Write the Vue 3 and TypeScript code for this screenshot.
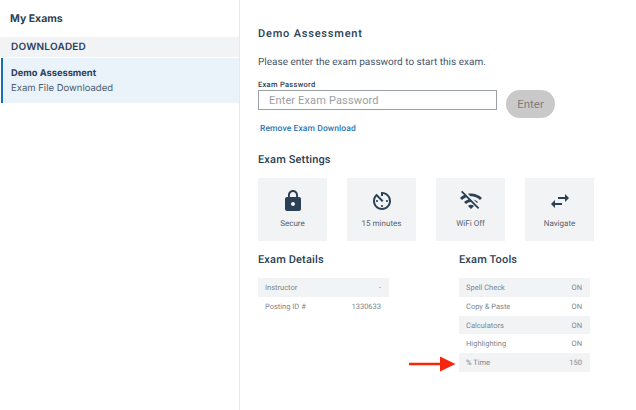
<script setup lang="ts">
const settings = [
  { label: 'Secure', icon: 'lock' },
  { label: '15 minutes', icon: 'timer' },
  { label: 'WiFi Off', icon: 'wifi' },
  { label: 'Navigate', icon: 'nav' },
]
const details = [
  ['Instructor', '-'],
  ['Posting ID #', '1330633'],
]
const tools = [
  ['Spell Check', 'ON'],
  ['Copy & Paste', 'ON'],
  ['Calculators', 'ON'],
  ['Highlighting', 'ON'],
  ['% Time', '150'],
]
</script>

<template>
  <div class="page">
    <aside class="side">
      <h1 class="side-title">My Exams</h1>
      <div class="group">DOWNLOADED</div>
      <div class="item">
        <div class="item-name">Demo Assessment</div>
        <div class="item-sub">Exam File Downloaded</div>
      </div>
    </aside>
    <main class="main">
      <h2 class="title">Demo Assessment</h2>
      <p class="intro">Please enter the exam password to start this exam.</p>
      <label class="pw-label">Exam Password</label>
      <div class="pw-row">
        <input class="pw" placeholder="Enter Exam Password" />
        <button class="enter" type="button">Enter</button>
      </div>
      <a class="remove">Remove Exam Download</a>
      <h3 class="head settings-head">Exam Settings</h3>
      <div class="cards">
        <div v-for="s in settings" :key="s.label" class="card">
          <svg class="icon" viewBox="0 0 24 24" width="24" height="24">
            <path v-if="s.icon === 'lock'" fill="#2b3f55" d="M18 8h-1V6c0-2.76-2.24-5-5-5S7 3.24 7 6v2H6c-1.1 0-2 .9-2 2v10c0 1.1.9 2 2 2h12c1.1 0 2-.9 2-2V10c0-1.1-.9-2-2-2zm-6 9c-1.1 0-2-.9-2-2s.9-2 2-2 2 .9 2 2-.9 2-2 2zm3.1-9H8.9V6c0-1.71 1.39-3.1 3.1-3.1s3.1 1.39 3.1 3.1v2z" />
            <path v-else-if="s.icon === 'timer'" fill="#2b3f55" d="M11 17c0 .55.45 1 1 1s1-.45 1-1-.45-1-1-1-1 .45-1 1zm0-14v4h2V5.08c3.39.49 6 3.39 6 6.92 0 3.87-3.13 7-7 7s-7-3.13-7-7c0-1.68.59-3.22 1.58-4.42L12 13l1.41-1.41-6.8-6.8v.02C4.42 6.45 3 9.05 3 12c0 4.97 4.02 9 9 9 4.97 0 9-4.03 9-9s-4.03-9-9-9h-1zm7 9c0-.55-.45-1-1-1s-1 .45-1 1 .45 1 1 1 1-.45 1-1zM6 12c0 .55.45 1 1 1s1-.45 1-1-.45-1-1-1-1 .45-1 1z" />
            <path v-else-if="s.icon === 'wifi'" fill="#2b3f55" d="M22.99 9C19.15 5.16 13.8 3.76 8.84 4.78l2.52 2.52c3.47-.17 6.99 1.05 9.63 3.7l2-2zm-4 4c-1.29-1.29-2.84-2.13-4.49-2.56l3.53 3.53.96-.97zM2 3.05L5.07 6.1C3.6 6.82 2.22 7.78 1 9l1.99 2c1.24-1.24 2.67-2.16 4.2-2.77l2.24 2.24C7.81 10.89 6.27 11.73 5 13v.01L6.99 15c1.36-1.36 3.14-2.04 4.92-2.06L18.98 20l1.27-1.26L3.29 1.79 2 3.05zM9 17l3 3 3-3c-1.65-1.66-4.34-1.66-6 0z" />
            <path v-else fill="#2b3f55" d="M6.99 11L3 15l3.99 4v-3H14v-2H6.99v-3zM21 9l-3.99-4v3H10v2h7.01v3L21 9z" />
          </svg>
          <span class="card-label">{{ s.label }}</span>
        </div>
      </div>
      <div class="columns">
        <section class="col-details">
          <h3 class="head">Exam Details</h3>
          <div class="table">
            <div v-for="r in details" :key="r[0]" class="row"><span>{{ r[0] }}</span><span>{{ r[1] }}</span></div>
          </div>
        </section>
        <section class="col-tools">
          <h3 class="head">Exam Tools</h3>
          <div class="table">
            <div v-for="r in tools" :key="r[0]" class="row">
              <span>{{ r[0] }}</span><span>{{ r[1] }}</span>
            </div>
          </div>
          <svg class="arrow" width="47" height="16" viewBox="0 0 47 16">
            <path fill="#f5260f" d="M0 6.8h31V0.5L46.5 8 31 15.5V9.2H0z" />
          </svg>
        </section>
      </div>
    </main>
  </div>
</template>

<style>
html, body { margin: 0; background: #fff; }
</style>

<style scoped>
.page {
  display: flex;
  width: 636px;
  height: 410px;
  overflow: hidden;
  font-family: Roboto, "Liberation Sans", sans-serif;
  color: #2b3f55;
  text-rendering: geometricPrecision;
}
.side {
  width: 239px;
  border-right: 1px solid #e6e9ec;
  flex: none;
}
.side-title {
  margin: 0;
  padding: 11px 10px 0;
  height: 26px;
  font: 700 10.5px/16px Inter, sans-serif;
}
.group {
  height: 20px;
  padding-left: 11px;
  background: #f1f3f5;
  font: 600 10px/20px Inter, sans-serif;
  letter-spacing: 0.2px;
}
.item {
  margin: 1px 0 0 1px;
  height: 45px;
  padding: 8px 0 0 8px;
  box-sizing: border-box;
  background: #ebf3fa;
  border-left: 2px solid #1a6fb0;
}
.item-name { font: 700 9.3px/15px Inter, sans-serif; }
.item-sub { font: 400 9.5px/15px Inter, sans-serif; color: #4b5c6e; }
.main {
  flex: 1;
  padding: 26px 0 0 18px;
  min-width: 0;
}
.title {
  margin: 0;
  font: 500 11px/16px Roboto, sans-serif;
  letter-spacing: 0.8px;
}
.intro {
  margin: 13px 0 0;
  font: 400 10px/16px Roboto, sans-serif;
  color: #45566a;
}
.pw-label {
  display: block;
  margin-top: 9px;
  font: 500 7.5px/10px Roboto, sans-serif;
  letter-spacing: 0.3px;
}
.pw-row { display: flex; align-items: flex-start; margin-top: 0; }
.pw {
  width: 239px;
  height: 20px;
  box-sizing: border-box;
  border: 1px solid #9a9fa5;
  padding: 0 10px;
  font: 400 11px Roboto, sans-serif;
  outline: none;
  letter-spacing: 0.15px;
  margin: 0;
}
.pw::placeholder { color: #9a9ea3; opacity: 1; }
.enter {
  margin: 0 0 0 9px;
  width: 49px;
  height: 28px;
  border: none;
  border-radius: 14px;
  background: #c9c9c9;
  color: #7d7d7d;
  font: 400 11.5px Roboto, sans-serif;
  padding: 0;
}
.remove {
  display: block;
  margin: 4px 0 0 2px;
  font: 500 8.5px/14px Roboto, sans-serif;
  color: #2a78b5;
  letter-spacing: 0.1px;
}
.head {
  margin: 0;
  font: 500 11px/16px Roboto, sans-serif;
  letter-spacing: 0.15px;
}
.settings-head { margin-top: 16px; }
.cards { display: flex; gap: 20px; margin-top: 10px; }
.card {
  width: 69px;
  height: 63px;
  background: #f1f3f5;
  display: flex;
  flex-direction: column;
  align-items: center;
  box-sizing: border-box;
  padding-top: 11px;
}
.icon { display: block; }
.card-label { margin-top: 5px; font: 400 8px/12px Roboto, sans-serif; color: #55636f; }
.columns { display: flex; margin-top: 11px; }
.col-details { width: 201px; }
.col-tools { width: 131px; position: relative; }
.table { margin-top: 10px; width: 131px; }
.row {
  display: flex;
  justify-content: space-between;
  height: 18.8px;
  padding: 0 8px 0 7px;
  box-sizing: border-box;
  font: 400 7.5px/19px Roboto, sans-serif;
  color: #80878f;
}
.row:nth-child(odd) { background: #f1f3f5; }
.arrow { position: absolute; left: -50px; top: 104px; }
</style>
